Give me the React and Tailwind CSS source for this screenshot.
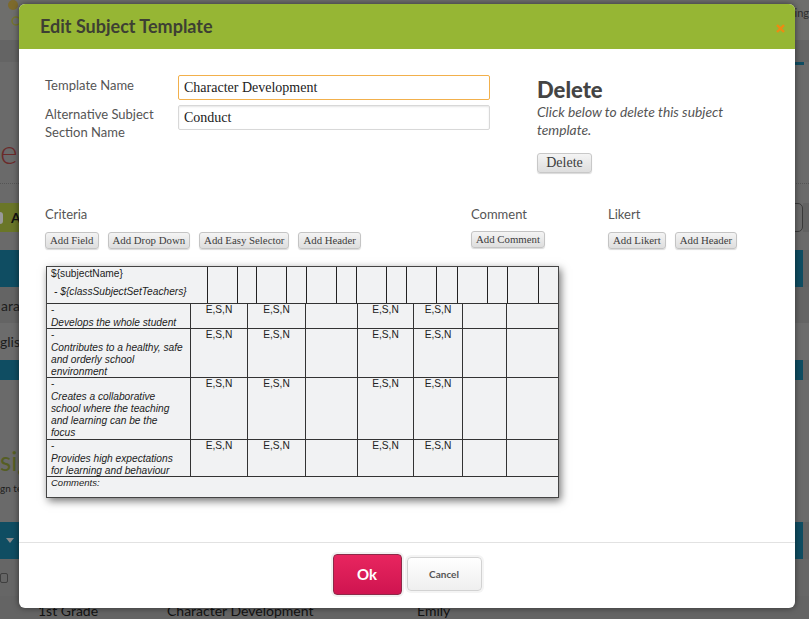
import React from "react";

const sans = "font-['Lato','Open_Sans',sans-serif]";
const serif = "font-['Liberation_Serif',serif]";
const arial = "font-['Liberation_Sans',sans-serif]";

const SmallButton = ({ children, className = "" }) => (
  <button
    className={`h-[17px] px-1 rounded-[3px] border border-[#c4c4c4] bg-gradient-to-b from-[#f4f4f4] to-[#dedede] shadow-[0_1px_1px_rgba(0,0,0,0.15)] text-[10.8px] leading-[15px] text-[#3c3c3c] whitespace-nowrap ${serif} ${className}`}
  >
    {children}
  </button>
);

const topLines = [
  "w-[161px]", "w-[30px]", "w-[19px]", "w-[30px]", "w-[20px]", "w-[30px]", "w-[20px]",
  "w-[30px]", "w-[20px]", "w-[30px]", "w-[21px]", "w-[30px]", "w-[20px]", "w-[31px]", "flex-1",
];

const rows = [
  { h: "h-[25px]", lines: ["Develops the whole student"] },
  { h: "h-[49px]", lines: ["Contributes to a healthy, safe", "and orderly school", "environment"] },
  { h: "h-[62px]", lines: ["Creates a collaborative", "school where the teaching", "and learning can be the", "focus"] },
  { h: "h-[37px]", lines: ["Provides high expectations", "for learning and behaviour"] },
];

const gridCols = "grid grid-cols-[144px_57px_58px_52px_56px_49px_44px_1fr]";

const TemplateTable = () => (
  <div className={`w-[513px] border border-[#444] bg-[#f1f2f3] shadow-[2px_3px_8px_rgba(0,0,0,0.55)] text-[10.2px] leading-[12px] text-[#222] ${arial}`}>
    <div className="flex h-[37px] border-b border-[#333]">
      {topLines.map((w, i) => (
        <div key={i} className={`${w} ${i < 14 ? "border-r border-[#222]" : ""} shrink-0`}>
          {i === 0 && (
            <div className="pl-[4px] pt-[1px]">
              <div>{"${subjectName}"}</div>
              <div className="pl-[3px] pt-[6px] italic whitespace-nowrap">{" - ${classSubjectSetTeachers}"}</div>
            </div>
          )}
        </div>
      ))}
    </div>
    {rows.map((row, i) => (
      <div key={i} className={`${gridCols} ${row.h} border-b border-[#333]`}>
        <div className="pl-[4px] border-r border-[#333] overflow-hidden whitespace-nowrap">
          <div className="h-[12.5px]">-</div>
          {row.lines.map((l) => (
            <div key={l} className="italic">{l}</div>
          ))}
        </div>
        <div className="border-r border-[#333] text-center">E,S,N</div>
        <div className="border-r border-[#333] text-center">E,S,N</div>
        <div className="border-r border-[#333]" />
        <div className="border-r border-[#333] text-center">E,S,N</div>
        <div className="border-r border-[#333] text-center">E,S,N</div>
        <div className="border-r border-[#333]" />
        <div />
      </div>
    ))}
    <div className="h-[20px] pl-[4px] italic text-[9.5px]">Comments:</div>
  </div>
);

// dimmed page behind the dialog, only the strips round the modal can be seen
const Backdrop = () => (
  <div className={`h-[619px] overflow-hidden bg-[#626262] text-[#1d1d1d] ${sans}`}>
    <div className="h-[40px] bg-[#6e6e6c] flex justify-between pt-[5px] text-[11px] text-[#2e2e2e]">
      <svg width="20" height="26" viewBox="0 0 20 26" className="ml-[6px] -mt-[5px]">
        <circle cx="7" cy="5" r="5" fill="#7d6a2c" />
        <circle cx="10" cy="21" r="4" fill="none" stroke="#75752f" strokeWidth="1.5" />
      </svg>
      <span>ging</span>
    </div>
    <div className="h-[22px] bg-[#646464]" />
    <div className="h-[141px] bg-[#6a6a6a] flex flex-col">
      <div className="h-[19px] flex justify-end mr-[5px]">
        <span className="h-[3px] w-[12px] bg-[#0f4d62]" />
      </div>
      <div className="mt-[42px] h-[61px] border-b border-dotted border-[#555] text-[34px] text-[#6b2a2a] font-light leading-[55px]">e</div>
    </div>
    <div className="h-[29px] bg-[#6a6a6a] flex justify-between mr-[6px]">
      <div className="w-[40px] bg-[#6a7628] flex items-center text-[14px] font-bold text-[#111]">
        <span className="w-[3px] h-[12px] rounded-r-full bg-[#999] mr-[8px]" />
        A
      </div>
      <div className="w-[40px] border border-[#3a3a3a] rounded-[5px]" />
    </div>
    <div className="h-[18px] bg-[#6a6a6a]" />
    <div className="h-[37px] bg-[#0f4d62] mr-[6px]" />
    <div className="h-[36px] bg-[#646464] flex items-center text-[14px] pl-[1px]">ara</div>
    <div className="h-[37px] bg-[#6c6c6c] flex items-center text-[14px]">glis</div>
    <div className="h-[20px] bg-[#0f4d62] mr-[6px]" />
    <div className="h-[142px] bg-[#6a6a6a] pt-[65px]">
      <div className="text-[26px] leading-[32px] text-[#555e24]">sig</div>
      <div className="text-[10px] leading-[12px] mt-[5px]">gn te</div>
    </div>
    <div className="h-[37px] bg-[#0f4d62] mr-[6px] flex items-center justify-start">
      <span className="ml-[6px] w-0 h-0 border-x-[4px] border-x-transparent border-t-[5px] border-t-[#8a8a8a]" />
    </div>
    <div className="h-[37px] bg-[#666] flex items-center">
      <div className="w-[8px] h-[10px] border border-[#3f3f3f] rounded-[2px]" />
    </div>
    <div className="flex items-end h-[23px] bg-[#646464] text-[14px] leading-[16px] text-[#111]">
      <div className="w-[38px]" />
      <div className="w-[129px]">1st Grade</div>
      <div className="w-[250px]">Character Development</div>
      <div>Emily</div>
    </div>
  </div>
);

export default function App() {
  return (
    <div className="relative w-[809px] h-[619px] overflow-hidden">
      <Backdrop />

      <div className={`absolute left-[19px] top-[4px] w-[776px] h-[604px] flex flex-col bg-white rounded-[6px] shadow-[0_0_6px_rgba(0,0,0,0.5)] overflow-hidden ${sans}`}>
        <div className="h-[45px] shrink-0 bg-[#96b634] flex items-center justify-between pl-[21px] pr-[10px] pb-[2px]">
          <h1 className="text-[18px] font-bold text-[#3d3f33] leading-none">Edit Subject Template</h1>
          <svg width="9" height="9" viewBox="0 0 9 9" className="mt-[5px]">
            <path d="M1 1L8 8M8 1L1 8" stroke="#ee8a12" strokeWidth="2.4" fill="none" />
          </svg>
        </div>

        <div className="flex-1 flex flex-col pl-[26px]">
          <div className="flex h-[138px]">
            <div className="w-[134px] pt-[27px] text-[13px] text-[#555] leading-[18px]">
              <div>Template Name</div>
              <div className="mt-[11px]">Alternative Subject<br />Section Name</div>
            </div>
            <div className="w-[359px] -ml-[1px] pt-[26px] flex flex-col gap-[5px]">
              <input
                readOnly
                value="Character Development"
                className={`w-[312px] h-[25px] px-[5px] rounded-[2px] border border-[#f2b04c] text-[14px] text-[#222] outline-none ${serif}`}
              />
              <input
                readOnly
                value="Conduct"
                className={`w-[312px] h-[25px] px-[5px] rounded-[2px] border border-[#d8d8d8] shadow-[inset_0_1px_2px_rgba(0,0,0,0.1)] text-[14px] text-[#222] outline-none ${serif}`}
              />
            </div>
            <div className="w-[220px] pt-[29px] text-[#444]">
              <h2 className="text-[22px] font-black leading-[24px] text-[#444]">Delete</h2>
              <p className="italic text-[13.8px] leading-[18px] text-[#555] mt-[1px]">Click below to delete this subject template.</p>
              <button className={`mt-[14px] h-[20px] w-[55px] rounded-[3px] border border-[#c8c8c8] bg-gradient-to-b from-[#f4f4f4] to-[#dedede] shadow-[0_1px_1px_rgba(0,0,0,0.15)] text-[14px] leading-[16px] text-[#3c3c3c] ${serif}`}>
                Delete
              </button>
            </div>
          </div>

          <div className="flex text-[13px] leading-[16px] text-[#555] mt-[19px]">
            <div className="w-[426px]">
              <div>Criteria</div>
              <div className="flex gap-[9px] mt-[10px]">
                <SmallButton>Add Field</SmallButton>
                <SmallButton>Add Drop Down</SmallButton>
                <SmallButton>Add Easy Selector</SmallButton>
                <SmallButton>Add Header</SmallButton>
              </div>
            </div>
            <div className="w-[137px]">
              <div>Comment</div>
              <SmallButton className="mt-[9px]">Add Comment</SmallButton>
            </div>
            <div>
              <div>Likert</div>
              <div className="flex gap-[9px] mt-[10px]">
                <SmallButton>Add Likert</SmallButton>
                <SmallButton>Add Header</SmallButton>
              </div>
            </div>
          </div>

          <div className="mt-[17px] ml-[1px]">
            <TemplateTable />
          </div>
        </div>

        <div className="h-[66px] shrink-0 border-t border-[#e2e2e2] flex justify-center items-start pt-[11px] gap-[5px]">
          <button className="w-[69px] h-[41px] rounded-[4px] border border-[#8c2a48] bg-gradient-to-b from-[#e8255f] to-[#cf1450] shadow-[0_0_0_2px_#f1f1f1] text-[15px] font-bold text-white">
            Ok
          </button>
          <button className="w-[75px] h-[34px] mt-[3px] rounded-[4px] border border-[#d2d2d2] bg-gradient-to-b from-white to-[#efefef] shadow-[0_0_0_2px_#f4f4f4] text-[10px] font-bold text-[#555]">
            Cancel
          </button>
        </div>
      </div>
    </div>
  );
}
